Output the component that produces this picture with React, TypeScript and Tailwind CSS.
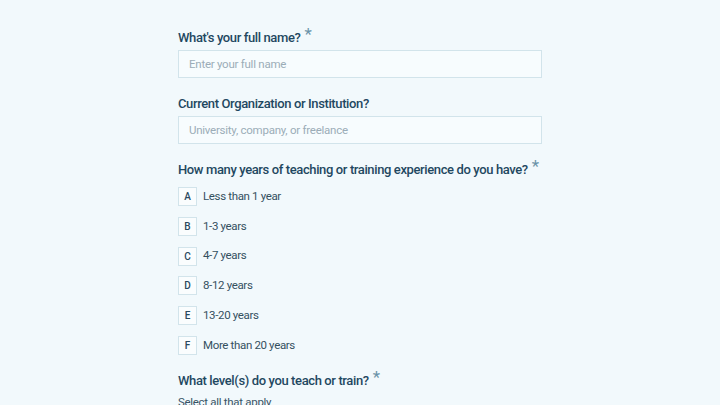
import React from 'react';

const options = [
  { key: 'A', label: 'Less than 1 year' },
  { key: 'B', label: '1-3 years' },
  { key: 'C', label: '4-7 years' },
  { key: 'D', label: '8-12 years' },
  { key: 'E', label: '13-20 years' },
  { key: 'F', label: 'More than 20 years' },
];

const Label: React.FC<{ text: string; required?: boolean }> = ({ text, required }) => (
  <div className="flex items-start text-[13px] leading-4 font-medium tracking-[-0.38px] text-[#1f4861] whitespace-nowrap">
    <span>{text}</span>
    {required && <span className="ml-[4px] -mt-[4px] text-[17px] text-[#6a93a8] font-normal">*</span>}
  </div>
);

const TextField: React.FC<{ placeholder: string }> = ({ placeholder }) => (
  <input
    type="text"
    placeholder={placeholder}
    className="w-full h-7 bg-[#f7fcfe] border border-[#d2e4eb] px-[10px] text-[11.5px] tracking-[-0.25px] text-[#2f4f63] placeholder:text-[#9badb8] focus:outline-none"
  />
);

export default function App() {
  return (
    <div
      className="w-[720px] h-[405px] overflow-hidden bg-[#f2f9fc]"
      style={{ fontFamily: 'Roboto, "Noto Sans", sans-serif' }}
    >
      <div className="w-[364px] mx-auto pt-[30px]">
        {/* Full name */}
        <Label text="What's your full name?" required />
        <div className="mt-[4px]">
          <TextField placeholder="Enter your full name" />
        </div>

        {/* Organization */}
        <div className="mt-[18px]">
          <Label text="Current Organization or Institution?" />
        </div>
        <div className="mt-[4px]">
          <TextField placeholder="University, company, or freelance" />
        </div>

        {/* Experience */}
        <div className="mt-[18px]">
          <Label text="How many years of teaching or training experience do you have?" required />
        </div>
        <div className="mt-[9px] flex flex-col gap-[10.8px]">
          {options.map((o) => (
            <div key={o.key} className="flex items-center gap-[6px]">
              <span className="w-[19px] h-[19px] flex items-center justify-center bg-[#fafdfe] border border-[#d2e4eb] text-[10px] font-medium text-[#2a4a5e]">
                {o.key}
              </span>
              <span className="text-[11.5px] tracking-[-0.35px] text-[#34505f]">{o.label}</span>
            </div>
          ))}
        </div>

        {/* Levels */}
        <div className="mt-[18px]">
          <Label text="What level(s) do you teach or train?" required />
        </div>
        <div className="mt-[5px] text-[11.5px] tracking-[-0.3px] text-[#3a5567]">Select all that apply</div>
      </div>
    </div>
  );
}
